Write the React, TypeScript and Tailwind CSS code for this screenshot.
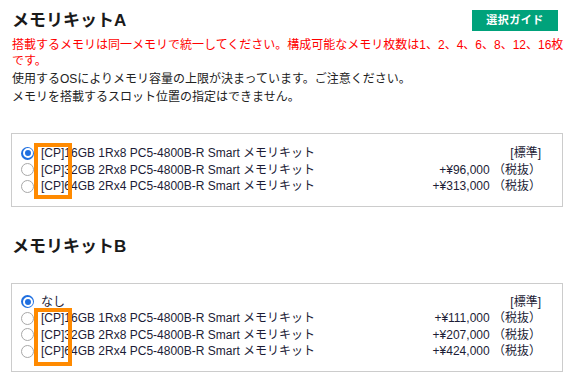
import React from "react";

type Opt = { label: string; price: string; checked?: boolean };

const kitA: Opt[] = [
  { label: "[CP]16GB 1Rx8 PC5-4800B-R Smart メモリキット", price: "[標準]", checked: true },
  { label: "[CP]32GB 2Rx8 PC5-4800B-R Smart メモリキット", price: "+¥96,000 （税抜）" },
  { label: "[CP]64GB 2Rx4 PC5-4800B-R Smart メモリキット", price: "+¥313,000 （税抜）" },
];

const kitB: Opt[] = [
  { label: "なし", price: "[標準]", checked: true },
  { label: "[CP]16GB 1Rx8 PC5-4800B-R Smart メモリキット", price: "+¥111,000 （税抜）" },
  { label: "[CP]32GB 2Rx8 PC5-4800B-R Smart メモリキット", price: "+¥207,000 （税抜）" },
  { label: "[CP]64GB 2Rx4 PC5-4800B-R Smart メモリキット", price: "+¥424,000 （税抜）" },
];

function Radio({ checked }: { checked?: boolean }) {
  if (checked) {
    return (
      <span className="w-[13px] h-[13px] rounded-full bg-[#1f6fe0] flex items-center justify-center shrink-0">
        <span className="w-[10px] h-[10px] rounded-full bg-[#1f6fe0] border-[2px] border-white" />
      </span>
    );
  }
  return <span className="w-[13px] h-[13px] rounded-full border border-[#a8a8a8] bg-white shrink-0" />;
}

function Row({ o }: { o: Opt }) {
  return (
    <div className="flex items-center h-[16.5px] leading-[16.5px]">
      <Radio checked={o.checked} />
      <span className="ml-[7px] whitespace-nowrap">{o.label}</span>
      <span className="ml-auto whitespace-nowrap">{o.price}</span>
    </div>
  );
}

function Heading({ children }: { children: React.ReactNode }) {
  return <h2 className="text-[17px] leading-[25px] font-bold text-[#1a1a1a] tracking-[0px]">{children}</h2>;
}

export default function App() {
  return (
    <div className="w-[573px] h-[381px] bg-white overflow-hidden pl-[11px] pr-[10px] text-[12px] text-[#222] font-['Liberation_Sans','Noto_Sans_CJK_JP',sans-serif] relative">
      <div className="flex items-center justify-between pt-[8px] pl-[1px]">
        <Heading>メモリキットA</Heading>
        <button className="w-[86px] h-[21px] mr-[5px] bg-[#00a27b] text-white text-[11px] font-bold leading-[21px] tracking-[0.5px]">
          選択ガイド
        </button>
      </div>
      <div className="pl-[1px] -mr-[8px]">
        <p className="mt-[4px] text-[#ff0000] leading-[16px]">
          搭載するメモリは同一メモリで統一してください。構成可能なメモリ枚数は1、2、4、6、8、12、16枚です。
        </p>
        <p className="mt-[1px] leading-[18px]">使用するOSによりメモリ容量の上限が決まっています。ご注意ください。</p>
        <p className="leading-[18px]">メモリを搭載するスロット位置の指定はできません。</p>
      </div>

      <div className="relative mt-[27px] border border-[#cccccc] pl-[9px] pr-[21px] pt-[11px] pb-[11px] text-[#1c1c36]">
        {kitA.map((o, i) => (
          <Row key={i} o={o} />
        ))}
        <div className="absolute left-[22px] top-[9px] w-[38px] h-[56px] border-[4px] border-[#ff8a00]" />
      </div>

      <div className="mt-[27px] pl-[1px]">
        <Heading>メモリキットB</Heading>
      </div>

      <div className="relative mt-[24px] border border-[#cccccc] pl-[9px] pr-[21px] pt-[10px] pb-[11px] text-[#1c1c36]">
        {kitB.map((o, i) => (
          <Row key={i} o={o} />
        ))}
        <div className="absolute left-[22px] top-[24px] w-[38px] h-[58px] border-[4px] border-[#ff8a00]" />
      </div>
    </div>
  );
}
